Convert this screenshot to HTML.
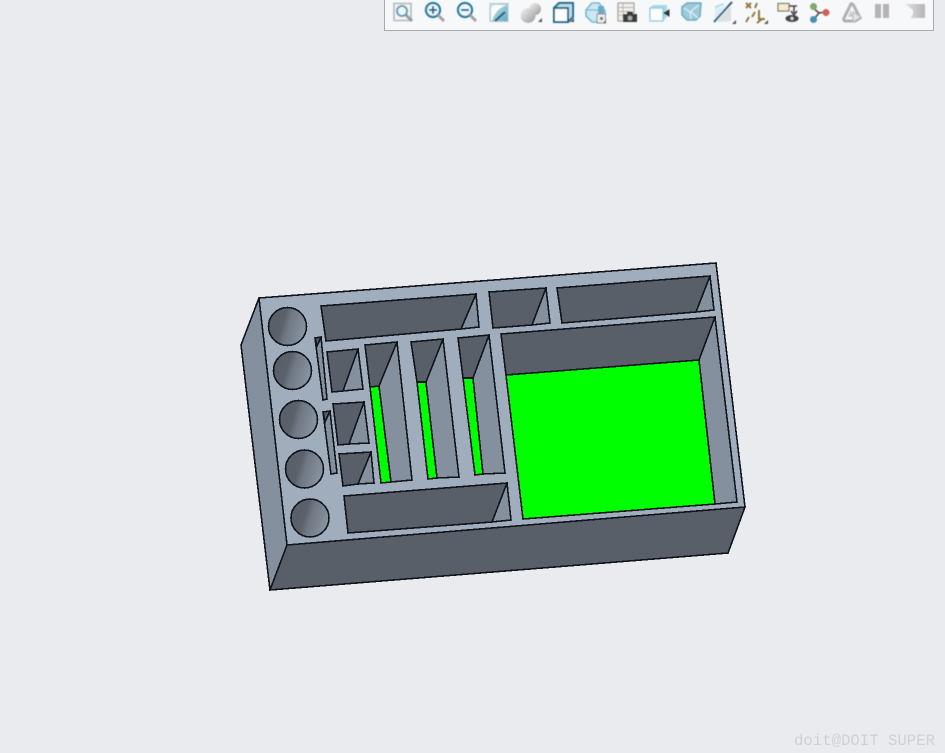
<!DOCTYPE html>
<html><head><meta charset="utf-8">
<style>
html,body{margin:0;padding:0;width:945px;height:753px;overflow:hidden;background:#e9ebef}
svg{position:absolute;left:0;top:0}
.m{font-family:"Liberation Mono",monospace}
</style></head>
<body>
<svg width="945" height="753" viewBox="0 0 945 753" xmlns="http://www.w3.org/2000/svg">
<defs>
<linearGradient id="cg" x1="0" y1="0.1" x2="1" y2="0.4">
<stop offset="0" stop-color="#585f69"/><stop offset="0.42" stop-color="#5a616b"/><stop offset="0.58" stop-color="#6f7883"/><stop offset="1" stop-color="#87929f"/>
</linearGradient>
<linearGradient id="sph" x1="0" y1="0" x2="1" y2="1"><stop offset="0" stop-color="#f4f4f4"/><stop offset="1" stop-color="#9a9a9a"/></linearGradient>
<linearGradient id="blue" x1="0" y1="0" x2="1" y2="1"><stop offset="0" stop-color="#cfe8f1"/><stop offset="1" stop-color="#5ea7c0"/></linearGradient>
<linearGradient id="gr" x1="0" y1="0" x2="1" y2="0"><stop offset="0" stop-color="#e2e2e2"/><stop offset="1" stop-color="#b4b4b4"/></linearGradient>
<filter id="soft" x="-5%" y="-20%" width="110%" height="140%"><feGaussianBlur stdDeviation="0.45"/></filter>
</defs>

<g stroke="#11151b" stroke-width="1.6" stroke-linejoin="miter" shape-rendering="crispEdges">
<!-- outer faces -->
<polygon points="259,298 716,263 745,507 287,545" fill="#a0adbc"/>
<polygon points="259,298 241,345 270,590 287,545" fill="#84909e"/>
<polygon points="287,545 745,507 728,553 270,590" fill="#585f69"/>

<!-- top row pockets -->
<polygon points="476,294 461,329 479,327" fill="#84909e"/>
<polygon points="321,306 476,294 461,329 326,341" fill="#585f69"/>
<polygon points="546,288 532,325 550,323" fill="#84909e"/>
<polygon points="489,292 546,288 532,325 493,328" fill="#585f69"/>
<polygon points="710,276 696,312 714,310" fill="#84909e"/>
<polygon points="557,288 710,276 696,312 562,323" fill="#585f69"/>

<!-- large pocket -->
<polygon points="715,317 699,360 715,504 737,502" fill="#84909e"/>
<polygon points="506,375 699,360 715,504 523,519" fill="#00ff00"/>
<polygon points="501,334 715,317 699,360 506,375" fill="#585f69"/>

<!-- slots -->
<polygon points="397,342 379,386 391,482 412,480" fill="#84909e"/>
<polygon points="370,387 379,386 391,482 381,483" fill="#00ff00"/>
<polygon points="365,345 397,342 379,386 370,387" fill="#585f69"/>

<polygon points="443,339 426,382 437,478 459,477" fill="#84909e"/>
<polygon points="417,382 426,382 437,478 428,479" fill="#00ff00"/>
<polygon points="411,342 443,339 426,382 417,382" fill="#585f69"/>

<polygon points="489,335 473,378 483,474 505,473" fill="#84909e"/>
<polygon points="463,378 473,378 483,474 475,475" fill="#00ff00"/>
<polygon points="458,338 489,335 473,378 463,378" fill="#585f69"/>

<!-- small pockets -->
<polygon points="358,349 343,391 363,389" fill="#84909e"/>
<polygon points="327,352 358,349 343,391 332,392" fill="#585f69"/>
<polygon points="364,402 349,444 369,443" fill="#84909e"/>
<polygon points="333,404 364,402 349,444 338,445" fill="#585f69"/>
<polygon points="371,452 358,484 374,483" fill="#84909e"/>
<polygon points="339,454 371,452 358,484 343,486" fill="#585f69"/>

<!-- bottom pocket -->
<polygon points="507,483 492,522 511,520" fill="#84909e"/>
<polygon points="344,496 507,483 492,522 348,533" fill="#585f69"/>

<!-- thin slots -->
<polygon points="315,338 321,337 327,399 323,400" fill="#84909e"/>
<polygon points="315,338 321,337 317,346" fill="#585f69"/>
<polygon points="323,412 330,411 337,473 331,474" fill="#84909e"/>
<polygon points="323,412 330,411 325,422" fill="#585f69"/>

<!-- circles -->
<circle cx="287.500" cy="326.500" r="19" fill="url(#cg)"/>
<circle cx="292.500" cy="370.500" r="19" fill="url(#cg)"/>
<circle cx="298.500" cy="419.500" r="19" fill="url(#cg)"/>
<circle cx="304.500" cy="469" r="19" fill="url(#cg)"/>
<circle cx="310" cy="518" r="19" fill="url(#cg)"/>
</g>

<!-- toolbar -->
<rect x="384.500" y="-2" width="549" height="32.500" fill="#f7f8fa" stroke="#a9abad" stroke-width="1"/>

<g filter="url(#soft)">
<!-- 1 zoom window -->
<rect x="394" y="3.500" width="17" height="17" fill="#f2f5f6" stroke="#b4babe" stroke-width="1.600"/>
<circle cx="402" cy="11" r="5" fill="#eef7fa" stroke="#5f9db6" stroke-width="2"/>
<path d="M406 15l6 6" stroke="#999" stroke-width="3"/>
<!-- 2 zoom in -->
<circle cx="433" cy="10" r="7" fill="#eef7fa" stroke="#1f7b9f" stroke-width="2.200"/>
<path d="M429 10h8M433 6v8" stroke="#17698c" stroke-width="2"/>
<path d="M438 15l6 6" stroke="#a3a3a3" stroke-width="3"/>
<!-- 3 zoom out -->
<circle cx="465" cy="10" r="7" fill="#eef7fa" stroke="#1f7b9f" stroke-width="2.200"/>
<path d="M461 10h8" stroke="#17698c" stroke-width="2"/>
<path d="M470 15l6 6" stroke="#a3a3a3" stroke-width="3"/>
<!-- 4 refit -->
<rect x="490" y="3.500" width="18" height="18" fill="url(#blue)" stroke="#b4c4ca" stroke-width="1"/>
<path d="M491 21V10q0-5 6-5h10q-11 3-15 16z" fill="#fbfdfd"/>
<path d="M495 21l10-9" stroke="#1f5c78" stroke-width="2"/>
<!-- 5 spheres -->
<circle cx="535" cy="9" r="6" fill="url(#sph)"/>
<circle cx="528" cy="15.500" r="7.500" fill="url(#sph)"/>
<path d="M542 22h-4l4-4z" fill="#555"/>
<!-- 6 cube -->
<path d="M554 8l5-5h14v14l-5 5h-14z" fill="#bcdce8" stroke="#1a6a8c" stroke-width="2"/>
<rect x="554" y="8" width="14" height="14" fill="#fff" stroke="#1a6a8c" stroke-width="2"/>
<path d="M574 22h-4l4-4z" fill="#555"/>
<!-- 7 cube with lock -->
<path d="M586 10l6-7h7l6 8v8l-6 3h-7l-6-6z" fill="#cbe7f1" stroke="#74b9d1" stroke-width="1.600"/>
<path d="M586 10h12" stroke="#74b9d1" stroke-width="1.200"/>
<path d="M598 6h6v9h-6z" fill="#6da9c4"/>
<rect x="597" y="14" width="8.500" height="9" fill="#eee" stroke="#888" stroke-width="1"/>
<rect x="600" y="17" width="3" height="3" fill="#777"/>
<path d="M606 23h-3l3-3z" fill="#555"/>
<!-- 8 table camera -->
<rect x="618" y="3" width="16" height="18" fill="#f0efeb" stroke="#a9a69c" stroke-width="1.300"/>
<path d="M618 7.500h16M618 11.500h12M618 15.500h8M623 3v16" stroke="#b5b2a8" stroke-width="1"/>
<rect x="623" y="14" width="14" height="8" fill="#3a3a3a"/>
<rect x="627" y="11.500" width="6" height="3" fill="#3a3a3a"/>
<circle cx="630" cy="18" r="2.400" fill="#aaa"/>
<!-- 9 cube arrow -->
<path d="M650 8l3-3h14v12l-4 4h-13z" fill="#a9d8e8"/>
<rect x="650" y="8" width="13" height="13" fill="#fff" stroke="#8fcde2" stroke-width="1.400"/>
<path d="M665 13h4M669 10l-5 3 5 3z" fill="#333" stroke="#333"/>
<!-- 10 transparent box -->
<path d="M682 7l5-4h14l-1 13-4 4h-9l-5-5z" fill="#9ccadc" stroke="#6ea9c2" stroke-width="1.500"/>
<path d="M684 8l6 4 9-7M690 12l1 7M691 12l7 6" stroke="#dcedf4" stroke-width="1.300" fill="none"/>
<!-- 11 section -->
<path d="M715 7h14v15h-14z" fill="#dceef5"/>
<path d="M731 6v15h-13z" fill="#dedede"/>
<path d="M714 22l18-20" stroke="#1f5f82" stroke-width="2"/>
<path d="M715 7l9-3" stroke="#a9d8e8" stroke-width="1.500"/>
<path d="M736 24h-4l4-4z" fill="#555"/>
<!-- 12 points csys -->
<path d="M746 3l5 5M751 3l-5 5M757 3l-2 5M755 12l-3 5M749 17l-3 5M759 10v9h6M762 19l-5 4" stroke="#927a3e" stroke-width="2" fill="none"/>
<path d="M768 24h-4l4-4z" fill="#555"/>
<!-- 13 annotation eye -->
<rect x="778" y="3.500" width="11" height="7.500" fill="#f7ecc9" stroke="#777" stroke-width="1.200"/>
<path d="M789 6h8M794 6v7M791 11l3 4 3-4" stroke="#444" stroke-width="1.500" fill="none"/>
<ellipse cx="792" cy="18.500" rx="6.500" ry="3.500" fill="#444"/>
<circle cx="792" cy="18.500" r="1.600" fill="#ddd"/>
<!-- 14 nodes -->
<path d="M813 8l6 5 6-1M819 13l-5 6" stroke="#444" stroke-width="1.500" fill="none"/>
<circle cx="813.500" cy="6.500" r="3.500" fill="#7cab6c"/>
<circle cx="826" cy="12.500" r="3.500" fill="#d0605c"/>
<circle cx="813.500" cy="19.500" r="3.500" fill="#4a8fb8"/>
<!-- 15 triangle play -->
<path d="M851 4l-7 14q-1 3 2 3h9l5-3-6-12q-2-3-3-2z" fill="none" stroke="#aeb0b1" stroke-width="3"/>
<path d="M851 10l-3 7h5z" fill="#c9caca"/>
<path d="M853 12l8 5-8 5z" fill="#e2e3e3" stroke="#b5b6b6"/>
<!-- 16 pause -->
<rect x="875" y="4" width="6" height="14" fill="#b4b4b4"/>
<rect x="883" y="4" width="6" height="14" fill="#b4b4b4"/>
<!-- 17 grey -->
<path d="M905 4h20v14h-15l3-3v-5l-4-3z" fill="url(#gr)"/>
</g>

<!-- watermark -->
<text class="m" x="794" y="745" font-size="16" fill="#ced1d4" textLength="141" lengthAdjust="spacingAndGlyphs">doit@DOIT SUPER</text>
</svg>
</body></html>
